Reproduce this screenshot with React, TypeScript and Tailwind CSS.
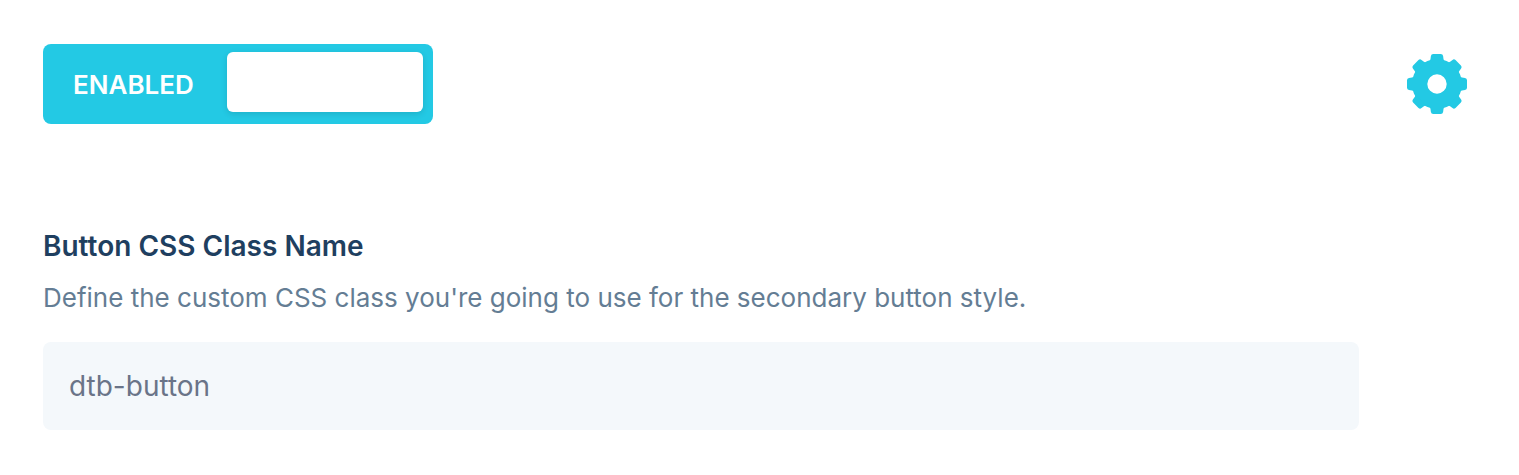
import { useState } from 'react';

const teeth = [0, 45, 90, 135, 180, 225, 270, 315];

function GearIcon() {
  return (
    <svg viewBox="-30 -30 60 60" className="size-[60px]" fill="currentColor" aria-hidden="true">
      <path
        fillRule="evenodd"
        d="M0-25A25 25 0 1 1 0 25A25 25 0 1 1 0-25ZM0-9.7A9.7 9.7 0 1 0 0 9.7A9.7 9.7 0 1 0 0-9.7Z"
      />
      {teeth.map((angle) => (
        <path
          key={angle}
          transform={`rotate(${angle})`}
          d="M-7.2-23L-6.5-25L-6.1-28Q-5.8-30-3.8-30H3.8Q5.8-30 6.1-28L6.5-25L7.2-23Z"
        />
      ))}
    </svg>
  );
}

export default function App() {
  const [enabled, setEnabled] = useState(true);
  const [className, setClassName] = useState('dtb-button');

  return (
    <main className="bg-white pt-11 pb-11 pl-[43px] pr-[52px] font-['Inter',sans-serif]">
      {/* Toggle and settings */}
      <div className="flex items-center justify-between">
        <label
          className={`flex h-20 w-[390px] cursor-pointer items-center rounded-lg px-2.5 py-2 ${
            enabled ? 'bg-[#23c9e4]' : 'flex-row-reverse bg-[#8a9bae]'
          }`}
        >
          <input
            type="checkbox"
            role="switch"
            className="sr-only"
            checked={enabled}
            onChange={(e) => setEnabled(e.target.checked)}
          />
          <span className="flex-1 px-5 pt-0.5 text-[26px] leading-8 font-semibold text-white">
            {enabled ? 'ENABLED' : 'DISABLED'}
          </span>
          <span className="mb-1 h-[60px] w-[196px] rounded-md bg-white shadow-[0_2px_6px_rgba(0,0,0,0.12)]" />
        </label>

        <button type="button" aria-label="Settings" className="cursor-pointer text-[#23c9e4]">
          <GearIcon />
        </button>
      </div>

      {/* Class name field */}
      <div className="mt-[104px] pr-[108px]">
        <label htmlFor="button-class" className="block text-[28px] leading-9 font-semibold text-[#1f3f60]">
          Button CSS Class Name
        </label>
        <p id="button-class-help" className="mt-[18px] text-[26px] leading-8 text-[#647d94]">
          Define the custom CSS class you're going to use for the secondary button style.
        </p>
        <input
          id="button-class"
          type="text"
          aria-describedby="button-class-help"
          className="mt-7 block h-[88px] w-full rounded-lg bg-[#f4f8fb] px-[26px] text-[28px] text-[#6a7488] outline-none"
          value={className}
          onChange={(e) => setClassName(e.target.value)}
        />
      </div>
    </main>
  );
}
